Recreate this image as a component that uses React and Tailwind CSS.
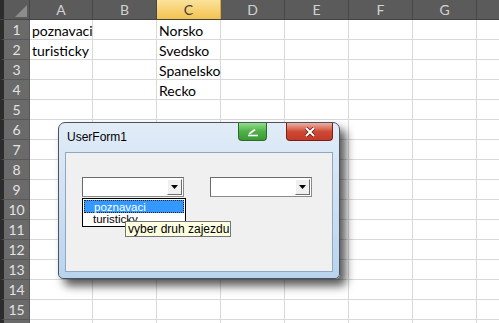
const cols = [
  { l: 'A', w: 63 },
  { l: 'B', w: 64 },
  { l: 'C', w: 64 },
  { l: 'D', w: 64 },
  { l: 'E', w: 64 },
  { l: 'F', w: 64 },
  { l: 'G', w: 64 },
  { l: '', w: 64 },
];

const cells = {
  '1A': 'poznavaci',
  '2A': 'turisticky',
  '1C': 'Norsko',
  '2C': 'Svedsko',
  '3C': 'Spanelsko',
  '4C': 'Recko',
};

const rows = Array.from({ length: 16 }, (_, i) => i + 1);

function Combo() {
  return (
    <div className="w-[102px] h-[20px] bg-white border border-[#8a8a8a] border-t-[#6a6a6a] border-l-[#6a6a6a] flex justify-end p-[1px]">
      <div className="w-[15px] h-full bg-[#f0f0f0] border border-t-white border-l-white border-b-[#6e6e6e] border-r-[#6e6e6e] flex items-center justify-center">
        <svg width="7" height="4" viewBox="0 0 7 4">
          <path d="M0 0h7L3.5 4z" fill="#000" />
        </svg>
      </div>
    </div>
  );
}

export default function App() {
  return (
    <div className="relative w-[499px] h-[323px] overflow-hidden bg-white font-['Lato',sans-serif]">
      {/* column headers */}
      <div className="flex h-5 bg-[#5b5b5b] border-b border-[#444]">
        <div className="w-[30px] shrink-0 h-full border-r border-[#474747] border-l-[4px] border-l-[#2c2c2c] relative">
          <svg className="absolute right-[2px] bottom-[2px]" width="12" height="12" viewBox="0 0 12 12">
            <path d="M12 0V12H0z" fill="#8c8c8c" />
          </svg>
        </div>
        {cols.map((c, i) => (
          <div
            key={i}
            style={{ width: c.w }}
            className={`shrink-0 h-full border-r flex items-center justify-center text-[14px] ${
              c.l === 'C'
                ? 'bg-gradient-to-b from-[#fbe29a] to-[#f3c34c] text-[#3d3d3d] border-[#d9a93a]'
                : 'text-[#d2d2d2] border-[#474747]'
            }`}
          >
            {c.l}
          </div>
        ))}
      </div>

      {/* rows */}
      {rows.map((r) => (
        <div key={r} className="flex h-5">
          <div className="w-[30px] shrink-0 h-full bg-[#6a6a6a] border-b border-r border-[#575757] border-l-[4px] border-l-[#2c2c2c] flex items-center justify-center text-[14px] text-[#e2e2e2]">
            {r < 16 ? r : ''}
          </div>
          {cols.map((c, i) => (
            <div
              key={i}
              style={{ width: c.w }}
              className="shrink-0 h-full border-r border-b border-[#d9d9d9] pl-[2px] pt-[1px] text-[14px] leading-[20px] text-black whitespace-nowrap"
            >
              {cells[`${r}${c.l}`] || ''}
            </div>
          ))}
        </div>
      ))}

      {/* UserForm dialog */}
      <div className="absolute left-[58px] top-[122px] w-[282px] h-[157px] rounded-t-[7px] rounded-b-[5px] border border-[#4d535c] bg-gradient-to-b from-[#e1ecf7] via-[#cfe0f2] to-[#b9d3ee] shadow-[6px_7px_10px_rgba(0,0,0,0.65)] flex flex-col font-['Liberation_Sans',sans-serif]">
        <div className="h-[29px] flex items-start">
          <span className="pl-[8px] pt-[7px] text-[12px] leading-[14px] text-black">UserForm1</span>
          <div className="ml-auto mr-[6px] flex gap-[19px]">
            <div className="w-[29px] h-[18px] rounded-b-[4px] border border-t-0 border-[#2d6b2a] bg-gradient-to-b from-[#8fe08a] via-[#4fb047] to-[#3a9a34] flex items-center justify-center">
              <svg width="12" height="10" viewBox="0 0 12 10">
                <path d="M2 7L8 2.5" stroke="#fff" strokeWidth="1.6" fill="none" />
                <path d="M1 8.5H11" stroke="#fff" strokeWidth="1.6" fill="none" />
              </svg>
            </div>
            <div className="w-[47px] h-[18px] rounded-b-[4px] border border-t-0 border-[#7a1e14] bg-gradient-to-b from-[#eab0a4] via-[#cf4a36] to-[#c23a28] flex items-center justify-center">
              <svg width="12" height="10" viewBox="0 0 12 10">
                <path d="M2 1L10 9M10 1L2 9" stroke="#5a1a12" strokeWidth="3.4" fill="none" />
                <path d="M2 1L10 9M10 1L2 9" stroke="#fff" strokeWidth="2" fill="none" />
              </svg>
            </div>
          </div>
        </div>

        <div className="relative flex-1 mx-[6px] mb-[6px] border border-[#8ea7c3] bg-[#f0f0f0] pt-[24px] pl-[16px] flex items-start gap-[26px]">
          <Combo />
          <Combo />

          {/* dropdown list */}
          <div className="absolute left-[16px] top-[45px] w-[104px] h-[29px] bg-white border border-black flex flex-col text-[11.5px] leading-[12px]">
            <div className="h-[13px] mx-[1px] mt-[1px] bg-[#3399ff] border border-dotted border-[#222] text-white pl-[9px]">
              poznavaci
            </div>
            <div className="h-[13px] pl-[10px] text-black">turisticky</div>
          </div>

          {/* tooltip */}
          <div className="absolute left-[59px] top-[68px] w-[106px] h-[16px] bg-[#ffffe1] border border-[#767676] pl-[2px] text-[12px] leading-[14px] text-black whitespace-nowrap">
            vyber druh zajezdu
          </div>
        </div>
      </div>
    </div>
  );
}
